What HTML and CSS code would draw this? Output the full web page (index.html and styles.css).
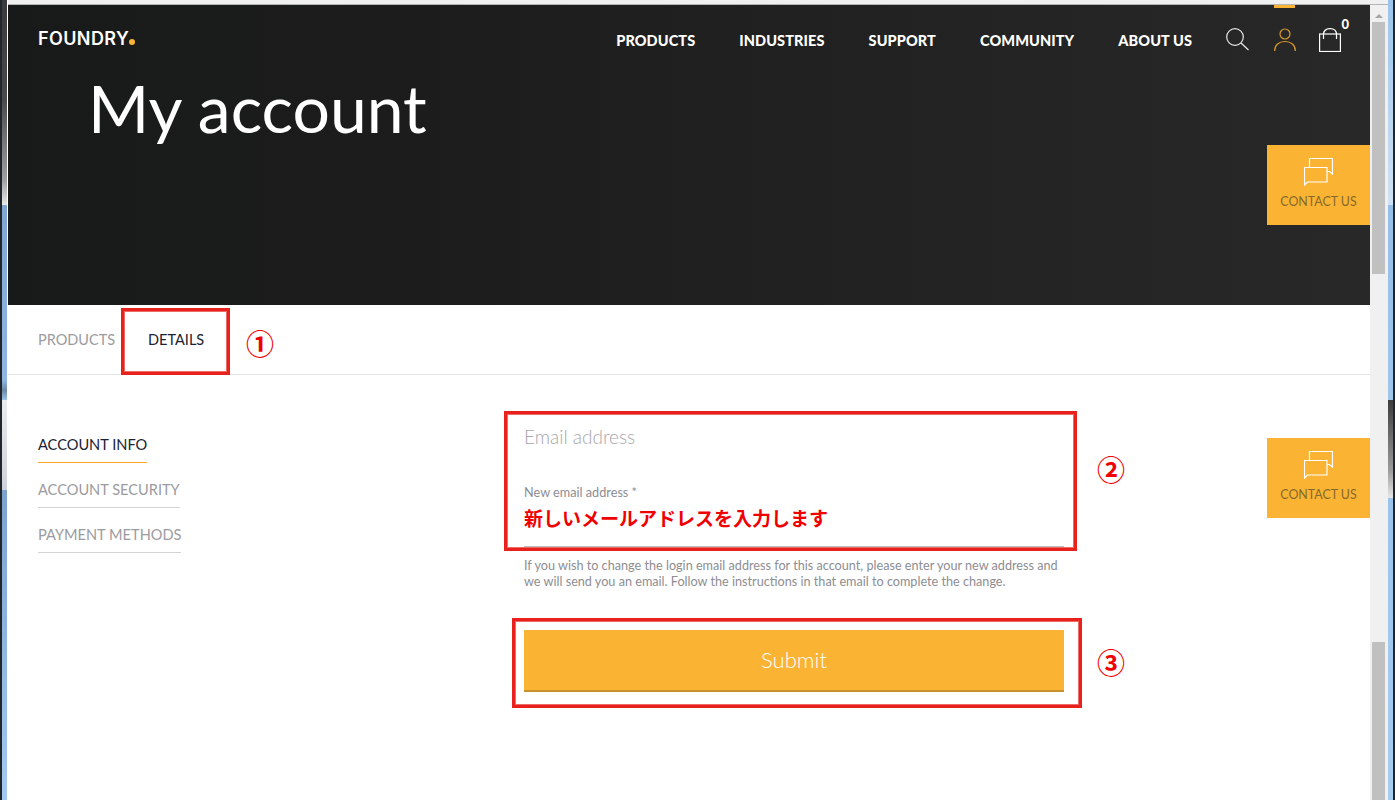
FILE: index.html
```html
<!DOCTYPE html>
<html lang="en">
<head>
<meta charset="utf-8">
<title>My account</title>
<link rel="stylesheet" href="styles.css">
</head>
<body>
<div class="window">
  <div class="frame-left"></div>
  <div class="column">
    <div class="top-strip"></div>
    <div class="content">
      <div class="page">
        <section class="hero">
          <header class="header">
            <a class="logo">FOUNDRY<span class="logo-dot"></span></a>
            <nav class="nav">
              <a>PRODUCTS</a><a>INDUSTRIES</a><a>SUPPORT</a><a>COMMUNITY</a><a>ABOUT US</a>
            </nav>
            <div class="icons">
              <svg class="icon" width="24" height="24" viewBox="0 0 24 24" fill="none" stroke="#e8e8e8" stroke-width="1.2"><circle cx="9" cy="9" r="8.3"/><path d="M15 15l7.5 7"/></svg>
              <span class="user-slot">
                <svg class="icon" width="22" height="24" viewBox="0 0 22 24" fill="none" stroke="#d99a2b" stroke-width="1.2"><circle cx="11" cy="6" r="5"/><path d="M.6 23c0-6 4.400-9.500 10.400-9.500S21.400 17 21.400 23"/></svg>
              </span>
              <span class="bag-slot">
                <svg class="icon" width="22" height="24" viewBox="0 0 22 24" fill="none" stroke="#fff" stroke-width="1.2"><rect x=".6" y="6" width="20.800" height="17.500"/><path d="M4.500 11V6.500C4.500 3 7 .6 11 .6s6.500 2.400 6.500 5.900V11"/></svg>
                <span class="badge">0</span>
              </span>
            </div>
          </header>
          <h1 class="title">My account</h1>
          <a class="contact contact-hero">
            <svg width="29" height="28" viewBox="0 0 29 28" fill="none" stroke="#fff" stroke-width="1.200"><path d="M5.500 9V.5h23v15.500l-3-2.500H23"/><path d="M.5 27V9.500h22.500v14.500H3.500z"/></svg>
            <span>CONTACT US</span>
          </a>
        </section>
        <nav class="tabs">
          <a class="tab">PRODUCTS</a>
          <a class="tab tab-active">DETAILS</a>
        </nav>
        <section class="body">
          <aside class="side">
            <a class="side-item side-active">ACCOUNT INFO</a>
            <a class="side-item">ACCOUNT SECURITY</a>
            <a class="side-item">PAYMENT METHODS</a>
          </aside>
          <form class="form">
            <h2 class="form-title">Email address</h2>
            <label class="field-label">New email address *</label>
            <div class="field-value">新しいメールアドレスを入力します</div>
            <p class="help">If you wish to change the login email address for this account, please enter your new address and we will send you an email. Follow the instructions in that email to complete the change.</p>
            <div class="submit">Submit</div>
          </form>
          <a class="contact contact-body">
            <svg width="29" height="28" viewBox="0 0 29 28" fill="none" stroke="#fff" stroke-width="1.200"><path d="M5.500 9V.5h23v15.500l-3-2.500H23"/><path d="M.5 27V9.500h22.500v14.500H3.500z"/></svg>
            <span>CONTACT US</span>
          </a>
        </section>
      </div>
      <div class="scrollbar">
        <div class="scroll-arrow"></div>
        <div class="thumb thumb-one"></div>
        <div class="thumb thumb-two"></div>
      </div>
    </div>
  </div>
  <div class="frame-right"></div>

  <div class="mark mark-tab"></div>
  <div class="mark mark-field"></div>
  <div class="mark mark-submit"></div>
  <span class="num num-1">①</span>
  <span class="num num-2">②</span>
  <span class="num num-3">③</span>
</div>
</body>
</html>
```

FILE: styles.css
```css
* { box-sizing: border-box; }
html, body { margin: 0; padding: 0; height: 800px; overflow: hidden; background: #fff; }
body { font-family: Lato, "Noto Sans", sans-serif; }
a { display: block; }

.window { position: relative; display: flex; width: 1395px; height: 800px; }

.frame-left {
  width: 8px; flex: none;
  border-left: 2px solid #20262c; border-right: 1px solid #fff;
  background: linear-gradient(to bottom, #3a3a3c 0, #4a4a4a 100px, #a0a0a0 180px, #e8e8e8 205px, #7fa6cc 205px, #90b8de 380px, #6d8aa8 390px, #9dc2e6 400px, #e8ecf0 400px, #cdd3da 490px, #7ba3cc 490px, #a4cbee 800px);
}
.frame-right {
  width: 7px; flex: none;
  border-right: 2px solid #20262c;
  background: linear-gradient(to bottom, #9cc4ea 0, #cfe2f5 205px, #94bfe8 205px, #a0c6ea 400px, #3c3c3c 400px, #9a9a9a 470px, #e8e8e8 498px, #9cc4ea 498px, #a6cdf0 800px);
}
.column { flex: 1; display: flex; flex-direction: column; min-width: 0; }
.top-strip { height: 5px; flex: none; background: #f0f0f0; border-bottom: 1px solid #b4b4b4; }
.content { flex: 1; display: flex; min-height: 0; }
.page { width: 1362px; flex: none; display: flex; flex-direction: column; position: relative; }

.scrollbar { position: relative; flex: 1; background: #f0f0f0; padding: 0 3px 0 2px; }
.scroll-arrow {
  position: absolute; left: 5px; top: 9px; width: 0; height: 0;
  border-left: 4px solid transparent; border-right: 4px solid transparent; border-bottom: 4px solid #a6a6a6;
}
.thumb { position: absolute; left: 2px; width: 13px; background: #c0c0c0; }
.thumb-one { top: 17px; height: 252px; }
.thumb-two { top: 637px; bottom: 0; }

.hero {
  position: relative; height: 300px; flex: none;
  background: linear-gradient(to right, #181a1a 0, #1c1c1c 30%, #282828 100%);
  color: #fff;
}
.header { display: flex; align-items: center; height: 70px; padding: 0 30px; }
.logo { font-family: Inter, sans-serif; font-weight: 600; font-size: 18px; letter-spacing: .4px; color: #fff; display: flex; align-items: baseline; margin-top: -4px; margin-right: auto; }
.logo-dot { flex: none; width: 6px; height: 6px; border-radius: 50%; background: #fbb334; margin-left: 0; }
.nav { display: flex; gap: 44px; font-weight: 900; font-size: 14.500px; letter-spacing: .1px; color: #fff; }
.icons { display: flex; align-items: center; margin-left: 34px; position: relative; margin-right: -1px; }
.icon { display: block; }
.user-slot { position: relative; display: block; margin-left: 24px; }
.user-slot::before { content: ""; position: absolute; left: 0; top: -23px; width: 21px; height: 3px; background: #fbb334; }
.bag-slot { position: relative; display: block; margin-left: 23px; }
.badge { position: absolute; right: -8px; top: -10px; font-size: 13px; font-weight: 900; color: #fff; line-height: 12px; }

.title { margin: -2px 0 0 80px; font-weight: 400; font-size: 66px; line-height: 70px; color: #fff; }

.contact {
  position: absolute; right: 0; width: 103px; height: 80px;
  display: flex; flex-direction: column; align-items: center; padding-top: 13px;
  background: #fbb334; color: #86692a; font-size: 12.400px; line-height: 16px;
}
.contact span { margin-top: 8px; }
.contact-hero { top: 140px; }
.contact-body { top: 63px; }

.tabs { display: flex; height: 70px; flex: none; border-bottom: 1px solid #e4e4e4; padding: 26px 0 0 30px; gap: 33px; font-size: 14.500px; line-height: 18px; color: #9b9ba0; }
.tab-active { color: #1b2233; }

.body { position: relative; flex: 1; display: flex; }
.side { width: 516px; flex: none; padding: 60px 0 0 30px; display: flex; flex-direction: column; gap: 17px; }
.side-item { align-self: flex-start; height: 28px; line-height: 20px; font-size: 14.600px; color: #9b9ba0; border-bottom: 1px solid #d3d3d6; }
.side-active { color: #1b2233; border-bottom-color: #f5a623; }

.form { width: 540px; flex: none; padding-top: 50px; }
.form-title { margin: 0; font-weight: 300; font-size: 19px; line-height: 24px; color: #a6a6ab; }
.field-label { display: block; margin-top: 35px; font-size: 12.700px; line-height: 16px; color: #8d8d92; }
.field-value { margin-top: 5px; height: 43px; border-bottom: 2px solid #bdbdbd; font-family: "Noto Sans CJK JP", sans-serif; font-weight: 700; font-size: 19px; line-height: 26px; color: #f00000; }
.help { margin: 10px 0 0; font-size: 12.650px; line-height: 16px; color: #8d8d92; }
.submit { margin-top: 40px; height: 62px; background: #fbb334; border-bottom: 2px solid #c8912e; color: #fff; font-weight: 300; font-size: 22px; line-height: 59px; text-align: center; }

.mark { position: absolute; border: 3px solid #e8211d; box-shadow: inset 0 0 0 1px #ee6a66; pointer-events: none; }
.mark-tab { left: 121px; top: 308px; width: 109px; height: 67px; }
.mark-field { left: 504px; top: 411px; width: 573px; height: 140px; }
.mark-submit { left: 512px; top: 618px; width: 570px; height: 90px; }
.num { position: absolute; font-family: "Noto Sans CJK JP", sans-serif; font-weight: 700; font-size: 28px; line-height: 32px; color: #f00000; }
.num-1 { left: 246px; top: 327px; }
.num-2 { left: 1097px; top: 453px; }
.num-3 { left: 1097px; top: 646px; }
```
